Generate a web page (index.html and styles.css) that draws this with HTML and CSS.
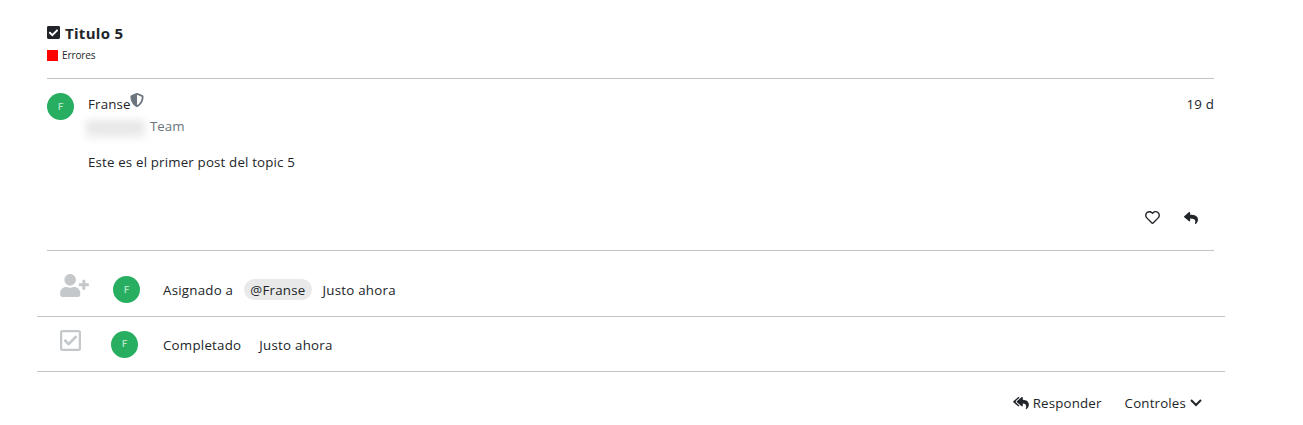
FILE: index.html
```
<!DOCTYPE html>
<html lang="es">
<head>
    <meta charset="UTF-8">
    <meta name="viewport" content="width=device-width, initial-scale=1.0">
    <link rel="stylesheet" href="styles.css">
    <title>Titulo 5</title>
</head>
<body>
    <div class="topic">
        <header class="topic-header">
            <h1>
                <svg class="icon-title" viewBox="0 32 448 448"><path d="M400 480H48c-26.51 0-48-21.49-48-48V80c0-26.51 21.49-48 48-48h352c26.51 0 48 21.49 48 48v352c0 26.51-21.49 48-48 48zm-204.686-98.059l184-184c6.248-6.248 6.248-16.379 0-22.627l-22.627-22.627c-6.248-6.248-16.379-6.249-22.628 0L184 302.745l-70.059-70.059c-6.248-6.248-16.379-6.248-22.628 0l-22.627 22.627c-6.248 6.248-6.248 16.379 0 22.627l104 104c6.249 6.249 16.379 6.249 22.628.001z"/></svg>
                <span>Titulo 5</span>
            </h1>
            <div class="category"><span class="category-color"></span><span>Errores</span></div>
        </header>

        <article class="post">
            <div class="avatar">F</div>
            <div class="post-body">
                <div class="post-meta">
                    <span>Franse</span>
                    <svg class="icon-shield" viewBox="0 0 512 512"><path d="M466.5 83.700l-192-80a48.150 48.150 0 0 0-36.900 0l-192 80C27.700 91.100 16 108.600 16 128c0 198.500 114.500 335.700 221.500 380.300 11.800 4.900 25.100 4.900 36.900 0C360.100 472.600 496 349.300 496 128c0-19.400-11.700-36.900-29.500-44.300zM256.100 446.300l-.1-381 175.900 73.300c-3.300 151.400-82.100 261.100-175.800 307.700z"/></svg>
                    <span class="post-date">19 d</span>
                </div>
                <div class="user-title"><span class="hidden-name"></span><span>Team</span></div>
                <p>Este es el primer post del topic 5</p>
                <div class="post-actions">
                    <svg class="icon-heart" viewBox="0 32 512 448"><path d="M458.4 64.3C400.6 15.7 311.3 23 256 79.3 200.7 23 111.4 15.6 53.6 64.3-21.6 127.6-10.6 230.8 43 285.5l175.4 178.7c10 10.2 23.4 15.900 37.600 15.900 14.300 0 27.600-5.600 37.600-15.800L469 285.600c53.500-54.700 64.700-157.900-10.600-221.300zm-23.600 187.500L259.400 430.500c-2.400 2.400-4.400 2.400-6.800 0L77.200 251.800c-36.500-37.200-43.900-107.600 7.300-150.700 38.900-32.700 98.900-27.800 136.500 10.500l35 35.700 35-35.700c37.800-38.500 97.800-43.200 136.500-10.600 51.100 43.100 43.500 113.900 7.300 150.800z"/></svg>
                    <svg class="icon-reply" viewBox="0 0 512 512"><path d="M8.309 189.836L184.313 37.851C199.719 24.546 224 35.347 224 56.015v80.053c160.629 1.839 288 34.032 288 186.258 0 61.441-39.581 122.309-83.333 154.132-13.653 9.931-33.111-2.533-28.077-18.631 45.344-145.012-21.507-183.510-176.590-185.742V360c0 20.700-24.300 31.453-39.687 18.164l-176.004-152c-11.071-9.562-11.086-26.753 0-36.328z"/></svg>
                </div>
            </div>
        </article>

        <div class="event event-assigned">
            <svg class="icon-event icon-user" viewBox="0 0 640 512"><path d="M624 208h-64v-64c0-8.800-7.200-16-16-16h-32c-8.800 0-16 7.200-16 16v64h-64c-8.800 0-16 7.200-16 16v32c0 8.800 7.200 16 16 16h64v64c0 8.800 7.200 16 16 16h32c8.800 0 16-7.200 16-16v-64h64c8.800 0 16-7.200 16-16v-32c0-8.800-7.200-16-16-16zm-400 48c70.700 0 128-57.300 128-128S294.700 0 224 0 96 57.300 96 128s57.300 128 128 128zm89.600 32h-16.700c-22.200 10.200-46.900 16-72.900 16s-50.600-5.800-72.900-16h-16.700C60.200 288 0 348.200 0 422.400V464c0 26.500 21.500 48 48 48h352c26.500 0 48-21.500 48-48v-41.600c0-74.200-60.200-134.400-134.400-134.400z"/></svg>
            <div class="avatar">F</div>
            <span class="event-text">Asignado a</span>
            <span class="mention">@Franse</span>
            <span class="event-time">Justo ahora</span>
        </div>
        <div class="event event-done">
            <svg class="icon-event icon-check" viewBox="0 32 448 448"><path d="M400 32H48C21.490 32 0 53.490 0 80v352c0 26.510 21.490 48 48 48h352c26.510 0 48-21.490 48-48V80c0-26.510-21.490-48-48-48zm0 400H48V80h352v352zm-35.864-241.724L191.547 361.480c-4.705 4.667-12.303 4.637-16.970-.068l-90.781-91.516c-4.667-4.705-4.637-12.303.069-16.971l22.719-22.536c4.705-4.667 12.303-4.637 16.970.069l59.792 60.277 141.352-140.216c4.705-4.667 12.303-4.637 16.970.068l22.536 22.718c4.667 4.706 4.637 12.304-.068 16.971z"/></svg>
            <div class="avatar">F</div>
            <span class="event-text">Completado</span>
            <span class="event-time">Justo ahora</span>
        </div>

        <footer class="topic-footer">
            <div class="action">
                <svg class="icon-reply-all" viewBox="0 0 576 512"><path d="M136.309 189.836L312.313 37.851C327.720 24.546 352 35.348 352 56.015v82.763c129.182 10.231 224 52.212 224 183.548 0 61.441-39.582 122.309-83.333 154.132-13.653 9.931-33.111-2.533-28.077-18.631 38.512-123.162-3.922-169.482-112.590-182.015v84.175c0 20.701-24.300 31.453-39.687 18.164L136.309 226.164c-11.071-9.561-11.086-26.753 0-36.328zm-128 36.328L184.313 378.150C199.700 391.439 224 380.687 224 359.986v-15.818l-108.606-93.785A55.960 55.960 0 0 1 96 207.998a55.953 55.953 0 0 1 19.393-42.380L224 71.832V56.015c0-20.667-24.280-31.469-39.687-18.164L8.309 189.836c-11.086 9.575-11.071 26.767 0 36.328z"/></svg>
                <span>Responder</span>
            </div>
            <div class="action">
                <span>Controles</span>
                <svg class="icon-chevron" viewBox="0 0 12 8"><path d="M1 1l5 5 5-5"/></svg>
            </div>
        </footer>
    </div>
</body>
</html>
```
FILE: styles.css
```
* {
    box-sizing: border-box;
}

body {
    margin: 0;
    background-color: #fff;
    color: #212529;
    font-family: "Open Sans", sans-serif;
    font-size: 13.3px;
    line-height: 20px;
    letter-spacing: 0.17px;
}

svg {
    display: block;
    flex: none;
    fill: currentColor;
}

.topic {
    width: 1188px;
    margin-left: 37px;
}

.topic-header {
    height: 79px;
    margin: 0 11px 0 10px;
    padding-top: 22px;
    border-bottom: 1px solid #c4c4c4;
}

h1 {
    display: flex;
    align-items: center;
    gap: 6px;
    height: 22px;
    margin: 0;
    font-size: 15px;
    font-weight: 700;
    letter-spacing: 0.3px;
}

.icon-title {
    width: 13px;
    height: 13px;
    margin-top: -2px;
}

h1 span {
    margin-left: -1px;
}

.category {
    display: flex;
    align-items: center;
    gap: 4px;
    height: 22px;
    font-size: 10px;
    letter-spacing: -0.1px;
}

.category-color {
    width: 11px;
    height: 11px;
    background-color: #f00;
}

.avatar {
    display: flex;
    flex: none;
    align-items: center;
    justify-content: center;
    width: 27px;
    height: 27px;
    border-radius: 50%;
    background-color: #27ae60;
    color: #b9e5cb;
    font-family: Roboto, sans-serif;
    font-size: 9.5px;
    font-weight: 500;
    letter-spacing: 0;
}

.post {
    display: flex;
    gap: 14px;
    height: 172px;
    margin: 0 11px 0 10px;
    padding-top: 14px;
    border-bottom: 1px solid #c4c4c4;
}

.post-body {
    flex: 1;
}

.post-meta {
    display: flex;
    height: 22px;
    padding-top: 1px;
}

.icon-shield {
    width: 14px;
    height: 14px;
    margin: -1px 0 0 -1px;
    color: #6c757d;
}

.post-date {
    margin-left: auto;
}

.user-title {
    display: flex;
    height: 22px;
    padding-top: 1px;
    color: #6c757d;
    letter-spacing: 0;
}

.hidden-name {
    width: 59px;
    height: 17px;
    margin: 5px 5px 0 -2px;
    background: linear-gradient(#dfe0e1, #f0f0f1);
    filter: blur(4px);
}

.post p {
    margin: 15px 0 0;
}

.post-actions {
    display: flex;
    align-items: center;
    justify-content: flex-end;
    gap: 24px;
    margin-top: 39px;
    padding-right: 16px;
}

.icon-heart {
    width: 15px;
    height: 13px;
    margin-top: -1px;
}

.icon-reply {
    width: 14px;
    height: 14px;
}

.event {
    display: flex;
    align-items: center;
    border-bottom: 1px solid #c4c4c4;
    letter-spacing: 0.24px;
}

.event-assigned {
    height: 66px;
    padding: 12px 0 0 23px;
}

.event-done {
    height: 55px;
    padding-left: 23px;
}

.icon-event {
    color: #c4c8cb;
}

.icon-user {
    width: 29px;
    height: 23px;
    margin: 0 24px 8px 0;
}

.icon-check {
    width: 21px;
    height: 21px;
    margin: 0 30px 7px 0;
}

.event-text {
    margin-left: 23px;
}

.event-done .event-text {
    margin-left: 25px;
}

.event-done span {
    padding-top: 1px;
}

.mention {
    height: 21px;
    margin: 0 11px;
    padding: 0 6px;
    border-radius: 11px;
    background-color: #e9e9e9;
    line-height: 22px;
}

.event-done .event-time {
    margin-left: 18px;
}

.topic-footer {
    display: flex;
    justify-content: flex-end;
    gap: 23px;
    padding: 21px 23px 0 0;
}

.action {
    display: flex;
    align-items: center;
    gap: 4px;
}

.icon-reply-all {
    width: 16px;
    height: 14px;
}

.icon-chevron {
    width: 12px;
    height: 8px;
    fill: none;
    stroke: currentColor;
    stroke-width: 2;
}
```
